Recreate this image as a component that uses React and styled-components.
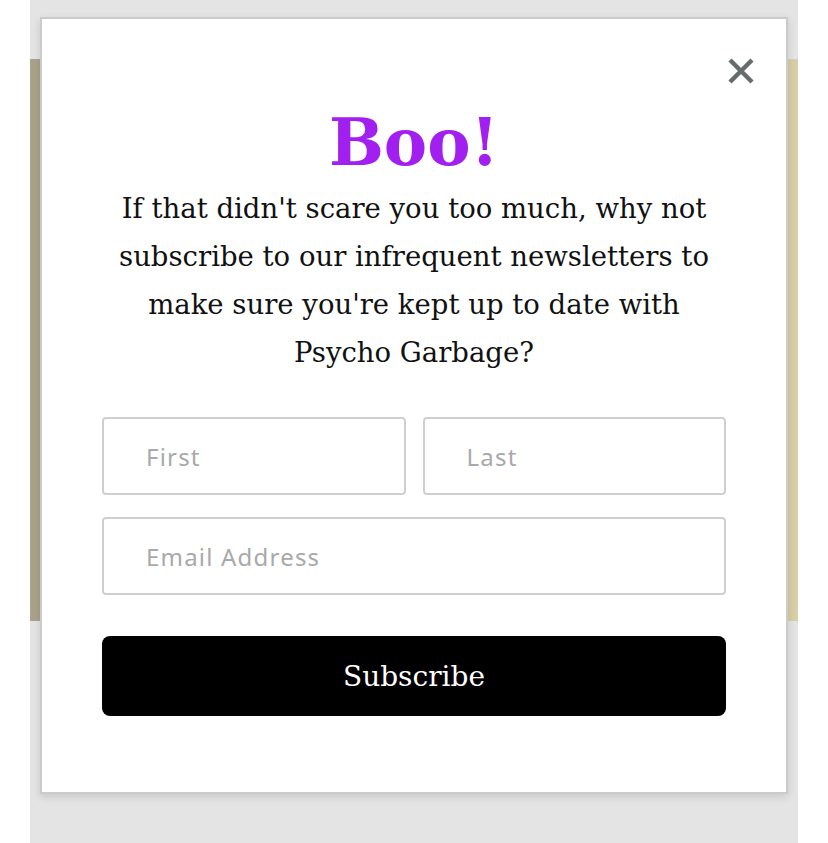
import styled, { createGlobalStyle } from "styled-components";

const GlobalStyle = createGlobalStyle`
  html, body {
    margin: 0;
    padding: 0;
    background: #fff;
  }
  * {
    box-sizing: border-box;
  }
`;

const Page = styled.div`
  position: relative;
  height: 843px;
  margin: 0 30px;
  background-color: #e4e4e4;
  padding-top: 59px;
`;

const Hero = styled.div`
  height: 562px;
  background: linear-gradient(90deg, #aaa18b 0%, #bdb498 45%, #d0c6a3 85%, #d8cea8 100%);
`;

const Modal = styled.div`
  position: absolute;
  top: 17px;
  left: 10px;
  width: 748px;
  height: 777px;
  background-color: #fff;
  border: 2px solid #cbcbcb;
  box-shadow: 0 3px 8px rgba(0, 0, 0, 0.12);
  padding: 0 60px;
  display: flex;
  flex-direction: column;
  align-items: stretch;
`;

const Close = styled.button`
  position: absolute;
  top: 36px;
  right: 29px;
  width: 32px;
  height: 32px;
  padding: 0;
  border: none;
  background: transparent;
  cursor: pointer;
  display: flex;
  align-items: center;
  justify-content: center;
`;

const Title = styled.h1`
  margin: 85px 0 0;
  font-family: "DejaVu Serif", Georgia, serif;
  font-weight: bold;
  font-size: 65px;
  line-height: 76px;
  color: #a120f0;
  text-align: center;
`;

const Text = styled.p`
  margin: 4px 0 0;
  font-family: "DejaVu Serif", Georgia, serif;
  font-size: 27.5px;
  line-height: 48px;
  color: #111;
  text-align: center;
`;

const Form = styled.form`
  margin-top: 41px;
  display: flex;
  flex-direction: column;
  gap: 22px;
`;

const Row = styled.div`
  display: flex;
  gap: 17px;
`;

const Field = styled.input`
  flex: ${(props) => (props.half ? "1 1 0" : "none")};
  min-width: 0;
  width: 100%;
  height: 78px;
  padding: 0 42px;
  border: 2px solid #cfcfcf;
  border-radius: 4px;
  font-family: "Noto Sans", sans-serif;
  font-size: 24px;
  letter-spacing: 1.2px;
  color: #333;
  background: #fff;
  outline: none;
  &::placeholder {
    color: #a9a9a9;
  }
`;

const Button = styled.button`
  margin-top: 19px;
  height: 80px;
  border: none;
  border-radius: 8px;
  background-color: #000;
  color: #fff;
  font-family: "DejaVu Serif", Georgia, serif;
  font-size: 28px;
  cursor: pointer;
`;

const CloseIcon = () => (
  <svg width="28" height="28" viewBox="0 0 28 28">
    <path
      d="M3 3 L25 25 M25 3 L3 25"
      stroke="#666b6e"
      strokeWidth="4.5"
      strokeLinecap="butt"
    />
  </svg>
);

const App = () => {
  return (
    <>
      <GlobalStyle />
      <Page>
        <Hero />
        <Modal>
          <Close aria-label="Close">
            <CloseIcon />
          </Close>
          <Title>Boo!</Title>
          <Text>
            If that didn't scare you too much, why not subscribe to our
            infrequent newsletters to make sure you're kept up to date with
            Psycho Garbage?
          </Text>
          <Form onSubmit={(e) => e.preventDefault()}>
            <Row>
              <Field half placeholder="First" />
              <Field half placeholder="Last" />
            </Row>
            <Field placeholder="Email Address" />
            <Button type="submit">Subscribe</Button>
          </Form>
        </Modal>
      </Page>
    </>
  );
};

export default App;
